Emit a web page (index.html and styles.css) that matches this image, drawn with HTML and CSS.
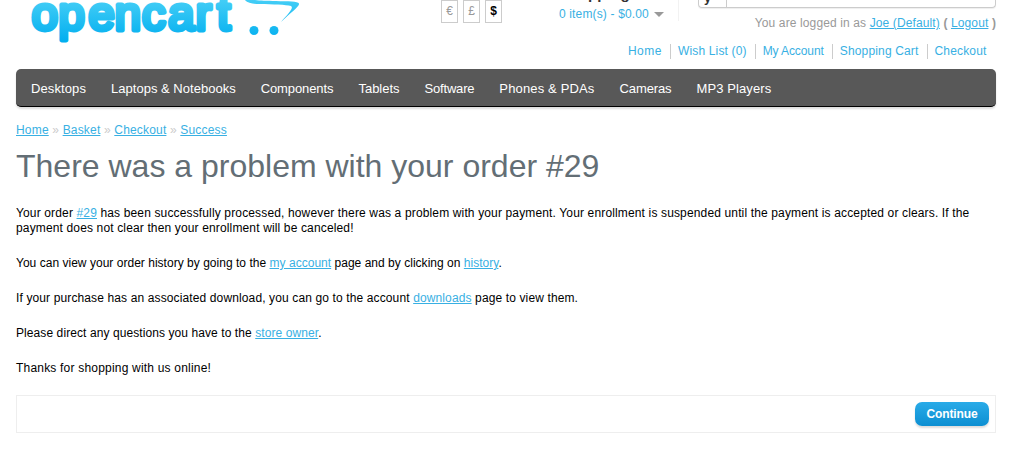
FILE: index.html
```html
<!DOCTYPE html>
<html lang="en">
<head>
<meta charset="utf-8">
<title>There was a problem with your order</title>
<link rel="stylesheet" href="styles.css">
</head>
<body>
<div class="container">
  <header class="header">
    <svg class="logo" width="300" height="46" viewBox="0 0 300 46">
      <defs>
        <linearGradient id="blue" gradientUnits="userSpaceOnUse" x1="0" y1="0" x2="0" y2="42">
          <stop offset="0" stop-color="#43cdf6"/>
          <stop offset="1" stop-color="#00aeef"/>
        </linearGradient>
      </defs>
      <text class="logo-text" y="29.8" x="31.8 58.4 88.4 114.8 142 168.2 195.8 217.3">opencart</text>
      <path fill="url(#blue)" d="M244 -1C247 3 252 4 260 4C273 4.500 286 4.500 291 6C294 8 289 13 281 22C290 13 300 6 299 3.500C298 1 288 1.500 276 1C262 0.500 254 1 249 -2Z"/>
      <circle fill="url(#blue)" cx="254" cy="30.5" r="4.5"/>
      <circle fill="url(#blue)" cx="274" cy="30.5" r="4.5"/>
    </svg>
    <div class="currency"><a>€</a><a>£</a><a class="on">$</a></div>
    <div class="cart"><h4>Shopping Cart</h4><a>0 item(s) - $0.00 <i class="arrow"></i></a></div>
    <div class="account">
      <div class="search"><span class="search-btn">y</span></div>
      <div class="welcome">You are logged in as <a>Joe (Default)</a> <b>(</b> <a>Logout</a> <b>)</b></div>
    </div>
  </header>
  <nav class="links"><a class="l1">Home</a><a class="l2">Wish List (0)</a><a class="l3">My Account</a><a class="l4">Shopping Cart</a><a class="l5">Checkout</a></nav>
  <nav class="menu"><a class="m1">Desktops</a><a class="m2">Laptops &amp; Notebooks</a><a class="m3">Components</a><a class="m4">Tablets</a><a class="m5">Software</a><a class="m6">Phones &amp; PDAs</a><a class="m7">Cameras</a><a class="m8">MP3 Players</a></nav>
  <div class="breadcrumb"><a>Home</a> » <a>Basket</a> » <a>Checkout</a> » <a>Success</a></div>
  <h1>There was a problem with your order #29</h1>
  <main class="content">
    <p><span class="p1">Your order <a>#29</a> has been successfully processed, however there was a problem with your payment. Your enrollment is suspended until the payment is accepted or clears. If the</span><br><span class="p2">payment does not clear then your enrollment will be canceled!</span></p>
    <p><span class="p3">You can view your order history by going to the <a>my account</a> page and by clicking on <a>history</a>.</span></p>
    <p><span class="p4">If your purchase has an associated download, you can go to the account <a>downloads</a> page to view them.</span></p>
    <p><span class="p5">Please direct any questions you have to the <a>store owner</a>.</span></p>
    <p><span class="p6">Thanks for shopping with us online!</span></p>
  </main>
  <div class="buttons"><a class="button">Continue</a></div>
</div>
</body>
</html>
```
FILE: styles.css
```css
* { box-sizing: border-box; }
body { margin: 0; background: #fff; color: #000; font: 12px/15px "Liberation Sans", Arial, sans-serif; overflow: hidden; }
.container { width: 980px; margin-left: 16px; }
a { color: #38b0e3; text-decoration: underline; text-underline-offset: 1px; white-space: nowrap; }
.header { display: flex; height: 42px; }
.logo { display: block; flex: none; margin-left: -16px; }
.logo-text { font: 47px "Liberation Sans", Arial, sans-serif; fill: url(#blue); stroke: url(#blue); stroke-width: 4.8px; stroke-linejoin: round; stroke-linecap: round; }
.currency { display: flex; gap: 5px; margin-left: 141px; height: 23px; }
.currency a { width: 17px; height: 23px; border: 1px solid #ccc; color: #999; text-decoration: none; text-align: center; line-height: 21px; }
.currency .on { color: #000; font-weight: bold; }
.cart { width: 120px; height: 21px; margin-left: 57px; border-right: 1px solid #f2f2f2; }
.cart h4 { margin: -14px 0 6px; font-size: 15px; line-height: 15px; letter-spacing: 0.2px; color: #333; }
.cart a { display: flex; align-items: center; text-decoration: none; letter-spacing: 0.15px; }
.arrow { border: 5px solid transparent; border-top-color: #999; border-bottom: 0; margin-left: 5px; }
.account { width: 298px; margin-left: 19px; }
.search { display: flex; height: 8px; border: 1px solid #ccc; border-top: 0; border-radius: 0 0 4px 4px; box-shadow: 0 1px 1px #eee; }
.search-btn { width: 28px; height: 17px; margin-top: -10px; padding-left: 5px; border-right: 1px solid #ccc; font-size: 13px; font-weight: bold; color: #333; }
.welcome { margin-top: 8px; text-align: right; color: #999; white-space: nowrap; letter-spacing: 0.12px; }
.links { display: flex; height: 27px; justify-content: flex-end; padding: 2px 9.5px 0 0; }
.links a { height: 15px; text-decoration: none; padding-left: 7px; margin-left: 8px; border-left: 1px solid #ccc; letter-spacing: 0.16px; }
.links .l1 { border: 0; letter-spacing: 0.5px; }
.links .l3 { letter-spacing: -0.1px; }
.menu { display: flex; height: 38px; padding: 0 15px; gap: 25px; background: #585858; border-bottom: 1px solid #000; border-radius: 5px; box-shadow: 0 2px 2px #ddd; }
.menu a { color: #fff; font-size: 13px; line-height: 39px; text-decoration: none; }
.menu .m1 { letter-spacing: 0.1px; }
.menu .m2 { letter-spacing: 0.02px; }
.menu .m3 { letter-spacing: -0.1px; }
.menu .m5 { letter-spacing: -0.2px; }
.menu .m6 { letter-spacing: 0.15px; }
.menu .m7 { letter-spacing: -0.1px; }
.menu .m8 { letter-spacing: 0.1px; }
.breadcrumb { margin-top: 16px; color: #ccc; letter-spacing: 0.18px; }
h1 { margin: 10px 0 0; font-weight: normal; font-size: 32px; line-height: 37px; color: #636e75; white-space: nowrap; }
.content { margin-top: 21px; }
.content p { margin: 0 0 20px; }
.content p:last-child { margin-bottom: 19px; }
.content span { white-space: nowrap; }
.p1, .p2 { letter-spacing: 0.144px; }
.p3 { letter-spacing: 0.024px; }
.p4 { letter-spacing: 0.125px; }
.p5 { letter-spacing: 0.085px; }
.p6 { letter-spacing: 0.2px; }
.buttons { display: flex; justify-content: flex-end; height: 38px; padding: 6px; border: 1px solid #eee; }
.button { width: 74px; height: 24px; border-radius: 7px; background: linear-gradient(#29abe8, #0d8fd2); color: #fff; font-weight: bold; text-align: center; line-height: 24px; text-decoration: none; letter-spacing: -0.1px; box-shadow: 0 2px 2px #ddd; }
```
